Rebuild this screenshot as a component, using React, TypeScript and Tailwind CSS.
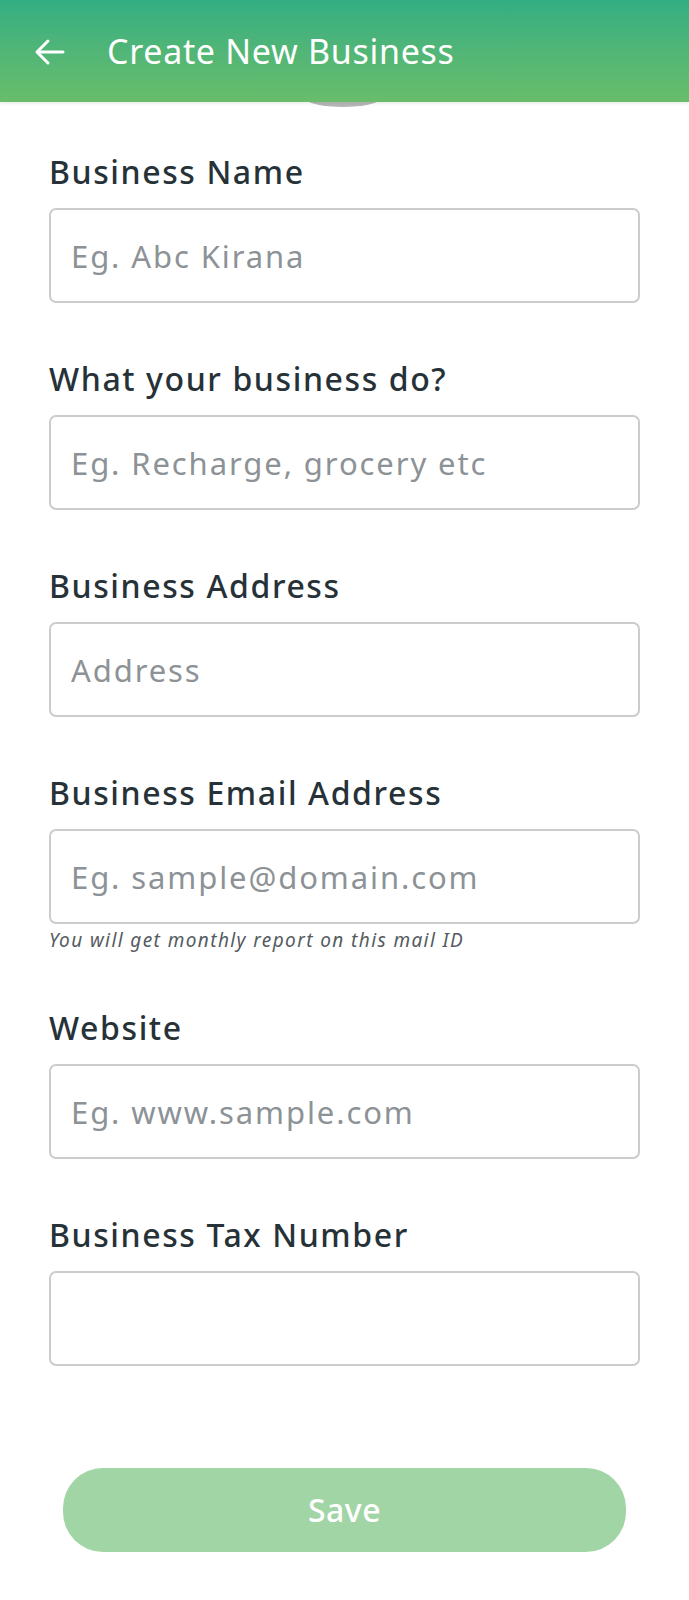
import { useState } from 'react';

type Field = {
  label: string;
  placeholder: string;
  hint?: string;
};

const fields: Field[] = [
  { label: 'Business Name', placeholder: 'Eg. Abc Kirana' },
  { label: 'What your business do?', placeholder: 'Eg. Recharge, grocery etc' },
  { label: 'Business Address', placeholder: 'Address' },
  {
    label: 'Business Email Address',
    placeholder: 'Eg. sample@domain.com',
    hint: 'You will get monthly report on this mail ID',
  },
  { label: 'Website', placeholder: 'Eg. www.sample.com' },
  { label: 'Business Tax Number', placeholder: '' },
];

export default function App() {
  const [values, setValues] = useState<Record<string, string>>({});

  return (
    <div className="min-h-[1600px] bg-white font-['Noto_Sans','Open_Sans',sans-serif]">
      <div className="relative">
        <div className="absolute left-[305px] top-[88px] h-[19px] w-[76px] rounded-[50%] bg-[#b8b8b8]" />
        <header className="relative flex h-[102px] items-center bg-gradient-to-b from-[#33ae82] to-[#68bd6a] shadow-[0_2px_3px_rgba(0,0,0,0.08)]">
          <button className="ml-[34px] mt-[2px] text-white">
            <svg width="32" height="28" viewBox="0 0 32 28" fill="none" stroke="currentColor" strokeWidth="3" strokeLinecap="round" strokeLinejoin="round">
              <path d="M29 14H4" />
              <path d="M14 3L3 14l11 11" />
            </svg>
          </button>
          <h1 className="ml-[41px] text-[34px] leading-[40px] tracking-[0.7px] text-white">Create New Business</h1>
        </header>
      </div>

      <form className="flex flex-col gap-[57px] px-[49px] pt-[51px]" onSubmit={(e) => e.preventDefault()}>
        {fields.map((f) => (
          <div key={f.label} className="flex flex-col">
            <label className="h-[38px] text-[32px] font-medium leading-[38px] tracking-[1.6px] text-[#263238]">
              {f.label}
            </label>
            <input
              value={values[f.label] ?? ''}
              placeholder={f.placeholder}
              onChange={(e) => setValues({ ...values, [f.label]: e.target.value })}
              className="mt-[17px] h-[95px] w-full rounded-[7px] border-2 border-[#cccccc] px-[20px] text-[31px] tracking-[1.9px] text-[#263238] placeholder:text-[#8c9296] outline-none"
            />
            {f.hint && (
              <p className="mt-[4px] text-[19px] italic leading-[24px] tracking-[1.4px] text-[#555b5f]">{f.hint}</p>
            )}
          </div>
        ))}

        <button
          type="submit"
          className="mx-[14px] mb-[40px] mt-[45px] h-[84px] rounded-[40px] bg-[#a2d5a6] text-[32px] font-medium tracking-[0.5px] text-white"
        >
          Save
        </button>
      </form>
    </div>
  );
}
